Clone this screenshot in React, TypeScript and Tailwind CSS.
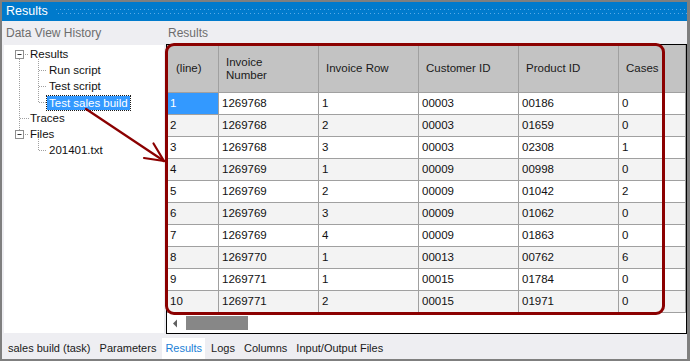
import React from 'react'

const font = { fontFamily: '"Liberation Sans", Arial, sans-serif' }

const columns = ['(line)', 'Invoice Number', 'Invoice Row', 'Customer ID', 'Product ID', 'Cases']

const rows = [
  ['1', '1269768', '1', '00003', '00186', '0'],
  ['2', '1269768', '2', '00003', '01659', '0'],
  ['3', '1269768', '3', '00003', '02308', '1'],
  ['4', '1269769', '1', '00009', '00998', '0'],
  ['5', '1269769', '2', '00009', '01042', '2'],
  ['6', '1269769', '3', '00009', '01062', '0'],
  ['7', '1269769', '4', '00009', '01863', '0'],
  ['8', '1269770', '1', '00013', '00762', '6'],
  ['9', '1269771', '1', '00015', '01784', '0'],
  ['10', '1269771', '2', '00015', '01971', '0'],
]

const tabs = ['sales build (task)', 'Parameters', 'Results', 'Logs', 'Columns', 'Input/Output Files']

function TitleDots() {
  return (
    <svg width="636" height="8" className="ml-[8px]">
      <defs>
        <pattern id="dots" width="4" height="8" patternUnits="userSpaceOnUse">
          <rect x="0" y="1" width="1" height="1" fill="#5aaae8" />
          <rect x="2" y="5" width="1" height="1" fill="#5aaae8" />
        </pattern>
      </defs>
      <rect width="636" height="8" fill="url(#dots)" />
    </svg>
  )
}

function TreeLines() {
  const dot = { stroke: '#a0a0a0', strokeWidth: 1, strokeDasharray: '1 1' }
  return (
    <svg width="160" height="120" className="absolute left-0 top-0 pointer-events-none">
      {/* root vertical */}
      <line x1="15.5" y1="14" x2="15.5" y2="86" {...dot} />
      {/* children of Results */}
      <line x1="34.5" y1="14" x2="34.5" y2="58" {...dot} />
      <line x1="19" y1="9.5" x2="25" y2="9.5" {...dot} />
      <line x1="35" y1="25.5" x2="43" y2="25.5" {...dot} />
      <line x1="35" y1="41.5" x2="43" y2="41.5" {...dot} />
      <line x1="35" y1="57.5" x2="43" y2="57.5" {...dot} />
      {/* traces */}
      <line x1="16" y1="73.5" x2="25" y2="73.5" {...dot} />
      {/* files */}
      <line x1="19" y1="89.5" x2="25" y2="89.5" {...dot} />
      <line x1="34.5" y1="94" x2="34.5" y2="106" {...dot} />
      <line x1="35" y1="105.5" x2="43" y2="105.5" {...dot} />
      {/* expand boxes */}
      {[5.5, 85.5].map((y) => (
        <g key={y}>
          <rect x="11.5" y={y} width="8" height="8" fill="#fff" stroke="#8e8e8e" />
          <line x1="13.5" y1={y + 4} x2="17.5" y2={y + 4} stroke="#333" />
        </g>
      ))}
    </svg>
  )
}

function TreeRow({ label, indent, selected }: { label: string; indent: number; selected?: boolean }) {
  return (
    <div className="h-[16px] flex items-center" style={{ paddingLeft: indent }}>
      <span
        className={
          selected
            ? 'bg-[#3399ff] text-white px-[2px] leading-[14px] outline outline-1 outline-dotted outline-[#1a1a1a]'
            : 'text-[#111]'
        }
      >
        {label}
      </span>
    </div>
  )
}

export default function App() {
  return (
    <div
      className="relative w-[690px] h-[361px] bg-[#7f7f7f] pt-[2px] pl-[2px] pr-[3px] pb-[2px] flex flex-col text-[11.5px] overflow-hidden"
      style={font}
    >
      {/* Title bar */}
      <div className="h-[19px] bg-[#007acc] flex items-center pl-[4px] shrink-0">
        <span className="text-white text-[12.5px] leading-none">Results</span>
        <TitleDots />
      </div>

      <div className="flex-1 bg-[#eeeef2] flex flex-col">
        <div className="flex h-[313px]">
          {/* Left column */}
          <div className="w-[164px] flex flex-col">
            <div className="h-[24px] flex items-center pl-[4px] text-[#6d6d6d] text-[12px]">Data View History</div>
            <div className="relative ml-[2px] w-[160px] h-[288px] bg-white pt-[2px] text-[11.5px]">
              <TreeLines />
              <TreeRow label="Results" indent={26} />
              <TreeRow label="Run script" indent={45} />
              <TreeRow label="Test script" indent={45} />
              <TreeRow label="Test sales build" indent={43} selected />
              <TreeRow label="Traces" indent={26} />
              <TreeRow label="Files" indent={26} />
              <TreeRow label="201401.txt" indent={45} />
            </div>
          </div>

          {/* Right column */}
          <div className="flex-1 flex flex-col">
            <div className="h-[23px] flex items-center pl-[2px] text-[#6d6d6d] text-[12px]">Results</div>
            <div className="h-[290px] border border-black bg-white flex flex-col">
              <div className="grid grid-cols-[52px_100px_100px_100px_100px_1fr]">
                {columns.map((c, i) => (
                  <div
                    key={c}
                    className={`h-[48px] bg-[#c3c3c3] border-r border-b border-[#a0a0a0] flex items-center text-[#1a1a1a] leading-[13px] ${
                      i === 0 ? 'pl-[9px]' : 'pl-[7px]'
                    }`}
                  >
                    <span className={i === 1 ? 'w-[60px]' : ''}>{c}</span>
                  </div>
                ))}
                {rows.map((r, ri) =>
                  r.map((v, ci) => {
                    const sel = ri === 0 && ci === 0
                    const bg = sel ? 'bg-[#3399ff] text-white' : ri % 2 === 1 ? 'bg-[#f3f3f3] text-[#111]' : 'bg-white text-[#111]'
                    return (
                      <div
                        key={`${ri}-${ci}`}
                        className={`h-[22px] border-r border-b border-[#a0a0a0] flex items-center pl-[3px] ${bg}`}
                      >
                        {v}
                      </div>
                    )
                  })
                )}
              </div>
              {/* Horizontal scrollbar */}
              <div className="flex-1 flex items-center pl-[5px]">
                <svg width="6" height="9" viewBox="0 0 6 9">
                  <path d="M5 0.5 L1 4.5 L5 8.5 Z" fill="#606060" />
                </svg>
                <div className="ml-[8px] w-[62px] h-[14px] bg-[#878787]" />
              </div>
            </div>
          </div>
        </div>

        {/* Bottom tabs */}
        <div className="flex-1 flex items-end pl-[3px] text-[11px]">
          {tabs.map((t) => (
            <div
              key={t}
              className={`h-[21px] px-[3px] mr-[3px] flex items-center ${
                t === 'Results' ? 'bg-white text-[#1c7fd6]' : 'text-[#1a1a1a]'
              }`}
            >
              {t}
            </div>
          ))}
        </div>
      </div>

      {/* Red annotation overlay */}
      <div className="absolute left-[165px] top-[43px] w-[500px] h-[272px] border-[3px] border-[#8b0000] rounded-[9px] pointer-events-none" />
      <svg width="690" height="361" className="absolute left-0 top-0 pointer-events-none">
        <g stroke="#8b0000" strokeWidth="2.2" fill="none" strokeLinecap="round">
          <line x1="86" y1="109" x2="164" y2="161" />
          <line x1="164" y1="161" x2="153.5" y2="143.5" />
          <line x1="164" y1="161" x2="144" y2="158" />
        </g>
      </svg>
    </div>
  )
}
